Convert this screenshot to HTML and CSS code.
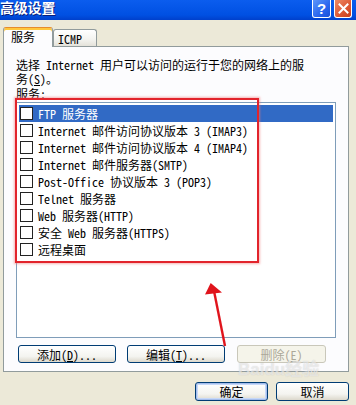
FILE: index.html
```html
<!DOCTYPE html>
<html lang="zh-CN">
<head>
<meta charset="utf-8">
<title>高级设置</title>
<link rel="stylesheet" href="styles.css">
</head>
<body>
<div class="window">
  <div class="titlebar">
    <span class="title">高级设置</span>
    <div class="tb-buttons">
      <span class="tb help">?</span>
      <span class="tb close"><svg width="11" height="11" viewBox="0 0 11 11"><path d="M1.5 1.5 L9.5 9.5 M9.5 1.5 L1.5 9.5" stroke="#fff" stroke-width="2" stroke-linecap="square"/></svg></span>
    </div>
  </div>
  <div class="body">
    <div class="tabs">
      <div class="tab active">服务</div>
      <div class="tab">ICMP</div>
    </div>
    <div class="panel">
      <p class="intro">选择 Internet 用户可以访问的运行于您的网络上的服<br>务(<u>S</u>)。</p>
      <div class="label">服务:</div>
      <div class="list">
        <div class="row sel"><span class="cb"></span><span class="txt">FTP 服务器</span></div>
        <div class="row"><span class="cb"></span><span class="txt">Internet 邮件访问协议版本 3 (IMAP3)</span></div>
        <div class="row"><span class="cb"></span><span class="txt">Internet 邮件访问协议版本 4 (IMAP4)</span></div>
        <div class="row"><span class="cb"></span><span class="txt">Internet 邮件服务器(SMTP)</span></div>
        <div class="row"><span class="cb"></span><span class="txt">Post-Office 协议版本 3 (POP3)</span></div>
        <div class="row"><span class="cb"></span><span class="txt">Telnet 服务器</span></div>
        <div class="row"><span class="cb"></span><span class="txt">Web 服务器(HTTP)</span></div>
        <div class="row"><span class="cb"></span><span class="txt">安全 Web 服务器(HTTPS)</span></div>
        <div class="row"><span class="cb"></span><span class="txt">远程桌面</span></div>
      </div>
      <div class="btnrow">
        <button class="btn w98">添加(<u>D</u>)...</button>
        <button class="btn w98 gap11">编辑(<u>T</u>)...</button>
        <button class="btn w89 gap12 disabled">删除(<u>E</u>)</button>
      </div>
    </div>
    <div class="footer">
      <button class="btn w73 default">确定</button>
      <button class="btn w73">取消</button>
    </div>
  </div>
  <div class="annot-box"></div>
  <svg class="arrow" width="356" height="405" viewBox="0 0 356 405">
    <line x1="225" y1="346" x2="214" y2="291" stroke="#E0141C" stroke-width="2.4"/>
    <polygon points="210.7,283 205,294.5 222,292.5" fill="#E0141C"/>
  </svg>
  <div class="watermark">Baidu经验</div>
</div>
</body>
</html>
```
FILE: styles.css
```css
* { box-sizing: border-box; }
html, body { margin: 0; padding: 0; }
body {
  width: 356px;
  height: 405px;
  overflow: hidden;
  background: #ECE9D8;
  font-family: "Noto Sans Mono CJK SC", "Noto Sans CJK SC", "Liberation Mono", monospace;
  font-size: 12px;
  color: #000;
}
.window { position: relative; width: 356px; height: 405px; }

.titlebar {
  height: 20px;
  background: linear-gradient(#0B5DEE, #0556E8 40%, #0050E2 75%, #0040CC);
  display: flex;
  justify-content: space-between;
  overflow: hidden;
}
.title {
  color: #fff;
  font-family: "Noto Sans CJK SC", sans-serif;
  font-weight: bold;
  font-size: 14px;
  line-height: 15px;
  margin: 0 0 0 0;
  text-shadow: 1px 1px 0 #0A1E7A;
  letter-spacing: -0.2px;
}
.tb-buttons { display: flex; gap: 3px; margin-right: 4px; }
.tb {
  width: 19px;
  height: 18px;
  border: 1px solid #fff;
  border-top: none;
  border-radius: 0 0 3px 3px;
  display: flex;
  align-items: center;
  justify-content: center;
}
.help {
  background: linear-gradient(135deg, #5C97FA, #2A66EE 60%, #1A50D8);
  color: #fff;
  font-family: "Liberation Sans", sans-serif;
  font-weight: bold;
  font-size: 15px;
  line-height: 15px;
}
.close {
  width: 18px;
  background: linear-gradient(135deg, #EE8A66, #DC5632 60%, #C8401C);
}

.body { padding: 0 7px 0 3px; }
.tabs {
  display: flex;
  align-items: flex-end;
  height: 19px;
  margin-top: 7px;
  position: relative;
  z-index: 1;
}
.tab {
  width: 44px;
  height: 17px;
  padding: 2px 0 0 4px;
  border: 1px solid #919B9C;
  border-bottom: none;
  border-radius: 3px 3px 0 0;
  background: linear-gradient(#FFFFFF, #F3F3EF 60%, #E4E2DA);
  line-height: 14px;
}
.tab.active {
  width: 50px;
  height: 20px;
  margin-bottom: -1px;
  padding: 2px 0 0 7px;
  background: #FCFCFE;
  border-top: 1px solid #E68B2C;
  box-shadow: inset 0 2px 0 #FFC73C;
}

.panel {
  height: 326px;
  border: 1px solid #919B9C;
  background: #FCFCFE;
  padding: 11px 12px 0 12px;
  display: flex;
  flex-direction: column;
}
.intro { margin: 0; line-height: 14px; }
.label { margin-top: 1px; line-height: 14px; }
.list {
  margin-top: 1px;
  width: 320px;
  height: 236px;
  border: 1px solid #7F9DB9;
  background: #fff;
  padding: 2px;
}
.row {
  height: 17px;
  display: flex;
  align-items: center;
  padding-left: 1px;
  white-space: nowrap;
}
.row.sel { background: #316AC5; color: #fff; }
.cb {
  width: 13px;
  height: 13px;
  border: 1px solid #222;
  background: #fff;
  margin-right: 5px;
  flex: none;
}
.txt { line-height: 17px; }

.btnrow { display: flex; margin: 7px 0 0 2px; }
.btn {
  height: 18px;
  border: 1px solid #003C74;
  border-radius: 3px;
  background: linear-gradient(#FFFFFF, #F4F4F0 65%, #DCD8CC);
  font: inherit;
  line-height: 15px;
  padding: 0;
  color: #000;
  text-align: center;
}
.w98 { width: 98px; }
.w89 { width: 89px; }
.w73 { width: 73px; height: 19px; }
.gap11 { margin-left: 11px; }
.gap12 { margin-left: 12px; }
.btn.disabled {
  border-color: #C9C7BA;
  color: #ACA899;
  background: #F5F4EA;
}
.btn.default {
  box-shadow: inset 0 0 0 1px #A4BDEC, inset 0 0 0 2px #C6D8F8;
}
.footer {
  display: flex;
  justify-content: flex-end;
  gap: 8px;
  margin-top: 10px;
}

.annot-box {
  position: absolute;
  left: 15px;
  top: 98px;
  width: 244px;
  height: 165px;
  border: 2px solid #E2242C;
  box-shadow: 0 0 2px 1px rgba(240, 120, 120, 0.55);
  pointer-events: none;
}
.arrow { position: absolute; left: 0; top: 0; pointer-events: none; }
.watermark {
  position: absolute;
  left: 238px;
  top: 362px;
  font-family: "Liberation Sans", "Noto Sans CJK SC", sans-serif;
  font-weight: bold;
  font-size: 17px;
  line-height: 15px;
  color: rgba(255, 255, 255, 0.55);
  text-shadow: 0 0 1px rgba(120, 120, 120, 0.35);
  pointer-events: none;
}
```
